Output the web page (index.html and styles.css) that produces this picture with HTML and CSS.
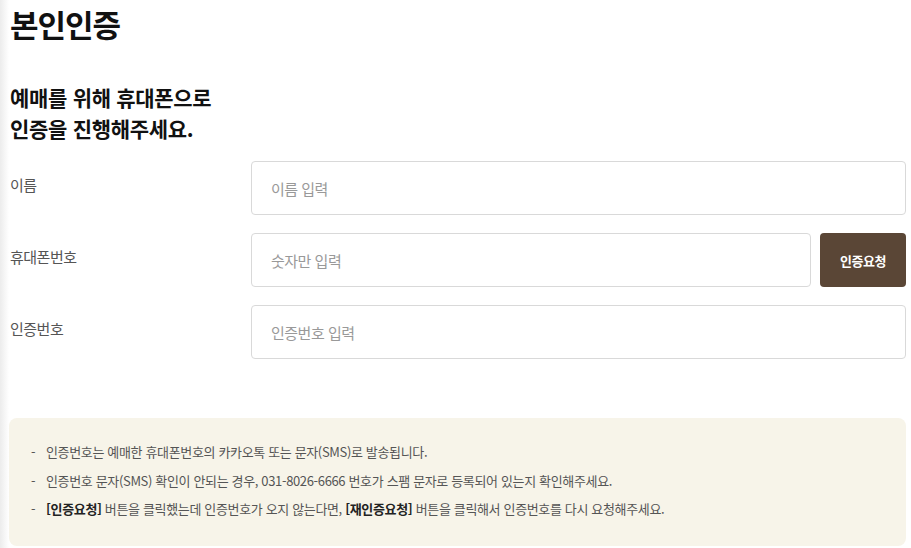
FILE: index.html
```html
<!DOCTYPE html>
<html lang="ko">
<head>
    <meta charset="UTF-8">
    <meta name="viewport" content="width=device-width, initial-scale=1.0">
    <title>본인인증</title>
    <link rel="stylesheet" href="styles.css">
</head>
<body>
    <div class="page">
        <h1>본인인증</h1>
        <h2>예매를 위해 휴대폰으로<br>인증을 진행해주세요.</h2>

        <form class="auth-form">
            <div class="row">
                <label for="name">이름</label>
                <div class="field">
                    <input type="text" id="name" placeholder="이름 입력">
                </div>
            </div>
            <div class="row">
                <label for="phone">휴대폰번호</label>
                <div class="field">
                    <input type="text" id="phone" placeholder="숫자만 입력">
                    <button type="button" class="req-btn">인증요청</button>
                </div>
            </div>
            <div class="row">
                <label for="code">인증번호</label>
                <div class="field">
                    <input type="text" id="code" placeholder="인증번호 입력">
                </div>
            </div>
        </form>

        <div class="notice">
            <ul>
                <li>인증번호는 예매한 휴대폰번호의 카카오톡 또는 문자(SMS)로 발송됩니다.</li>
                <li>인증번호 문자(SMS) 확인이 안되는 경우, 031-8026-6666 번호가 스팸 문자로 등록되어 있는지 확인해주세요.</li>
                <li><strong>[인증요청]</strong> 버튼을 클릭했는데 인증번호가 오지 않는다면, <strong>[재인증요청]</strong> 버튼을 클릭해서 인증번호를 다시 요청해주세요.</li>
            </ul>
        </div>
    </div>
</body>
</html>
```

FILE: styles.css
```css
body {
    margin: 0;
    font-family: "Noto Sans CJK KR", "Noto Sans", sans-serif;
    color: #222;
    background: linear-gradient(to right, #ececec 0, #fff 9px);
}
.page {
    padding: 0 5px 0 10px;
}
h1 {
    margin: 0;
    padding-top: 2px;
    font-size: 31px;
    line-height: 44px;
    font-weight: 700;
    color: #111;
    letter-spacing: -1px;
}
h2 {
    margin: 36px 0 0;
    font-size: 21px;
    line-height: 31px;
    font-weight: 700;
    color: #111;
    letter-spacing: -0.3px;
}
.auth-form {
    margin-top: 17px;
    display: flex;
    flex-direction: column;
    gap: 18px;
}
.row {
    display: flex;
}
.row label {
    width: 241px;
    flex-shrink: 0;
    font-size: 15px;
    line-height: 48px;
    color: #555;
    letter-spacing: -0.5px;
}
.field {
    flex: 1;
    display: flex;
    gap: 9px;
}
.field input {
    flex: 1;
    height: 54px;
    box-sizing: border-box;
    border: 1px solid #d9d9d9;
    border-radius: 4px;
    padding: 0 19px;
    font-family: inherit;
    font-size: 15px;
    color: #333;
    letter-spacing: -0.5px;
}
.field input::placeholder {
    color: #999;
}
.req-btn {
    width: 86px;
    height: 54px;
    border: none;
    border-radius: 4px;
    background-color: #5a4636;
    color: #fff;
    font-family: inherit;
    font-size: 13px;
    font-weight: 700;
    letter-spacing: -0.5px;
    cursor: pointer;
}
.notice {
    margin: 59px 0 0 -1px;
    background-color: #f7f4e9;
    border-radius: 8px;
    padding: 20px 20px 22px 22px;
}
.notice ul {
    margin: 0;
    padding: 0;
    list-style: none;
}
.notice li {
    position: relative;
    padding-left: 15px;
    font-size: 13px;
    line-height: 28.5px;
    color: #555;
    letter-spacing: -0.35px;
}
.notice li::before {
    content: "-";
    position: absolute;
    left: 0;
}
.notice strong {
    color: #222;
}
```
